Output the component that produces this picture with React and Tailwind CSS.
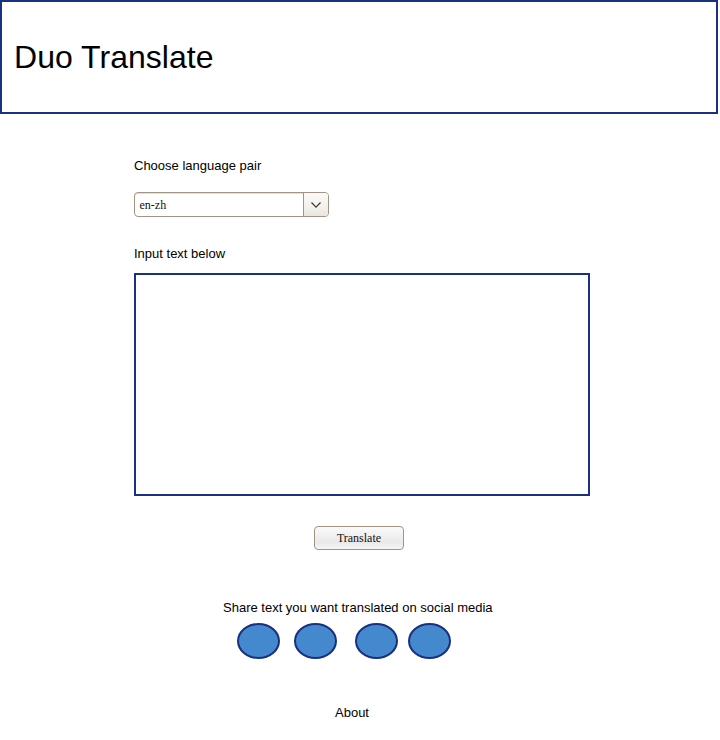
const SHARE_TARGETS = [
  { id: "first", spacing: "" },
  { id: "second", spacing: "ml-[14px]" },
  { id: "third", spacing: "ml-[18px]" },
  { id: "fourth", spacing: "ml-[10px]" },
];

function Header() {
  return (
    <header className="h-[114px] w-[718px] border-2 border-[#1a3080] pt-[37px] pl-3">
      <h1 className="text-[32px] leading-9 tracking-[0.02px]">Duo Translate</h1>
    </header>
  );
}

function LanguageSelect() {
  return (
    <button
      type="button"
      className="mt-4 flex h-[25px] w-[195px] overflow-hidden rounded-[4px] border border-[#a39482] bg-white text-left font-['Liberation_Serif',serif] text-xs text-[#111] shadow-[inset_0_1px_0_#e4dfd9]"
    >
      <span className="flex-1 pl-[4.5px] leading-[24px]">en-zh</span>
      <span className="flex h-full w-[25px] items-center justify-center border-l border-[#a39482] bg-linear-to-b from-[#fbfaf9] via-[#f3f1ee] via-60% to-[#e9e6e0]">
        <svg width="10" height="6" viewBox="0 0 10 6" fill="none" className="mt-px">
          <path d="M0.5 0.5 5 5.2 9.5 0.5" stroke="#333" strokeWidth="1.1" />
        </svg>
      </span>
    </button>
  );
}

function ShareLinks() {
  return (
    <div className="mt-[5px] ml-[14px] flex">
      {SHARE_TARGETS.map((target) => (
        <span
          key={target.id}
          className={`h-9 w-[43px] rounded-[50%] border-2 border-[#1a3080] bg-[#4489cd] ${target.spacing}`}
        />
      ))}
    </div>
  );
}

export default function App() {
  return (
    <div className="h-[740px] w-[720px] overflow-hidden bg-white font-['Liberation_Sans',Arial,sans-serif] text-[13px] leading-5 text-black">
      <Header />
      <main className="ml-[134px] w-[456px] pt-[42px]">
        <p>Choose language pair</p>
        <LanguageSelect />
        <p className="mt-[27px]">Input text below</p>
        <textarea
          aria-label="Input text"
          className="mt-[9px] block h-[223px] w-full resize-none border-2 border-[#1a3080] bg-white"
        />
        <button
          type="button"
          className="mt-[30px] ml-[180px] block h-6 w-[90px] rounded-[4px] border border-[#a39482] bg-linear-to-b from-[#fafafa] via-[#e9e9e9] via-70% to-[#f6f6f6] font-['Liberation_Serif',serif] text-xs leading-[22px] text-[#111]"
        >
          Translate
        </button>
      </main>
      <footer className="mt-[48px] ml-[223px] w-[272px]">
        <p className="whitespace-nowrap">Share text you want translated on social media</p>
        <ShareLinks />
        <p className="mt-[44px] ml-[112px]">About</p>
      </footer>
    </div>
  );
}
